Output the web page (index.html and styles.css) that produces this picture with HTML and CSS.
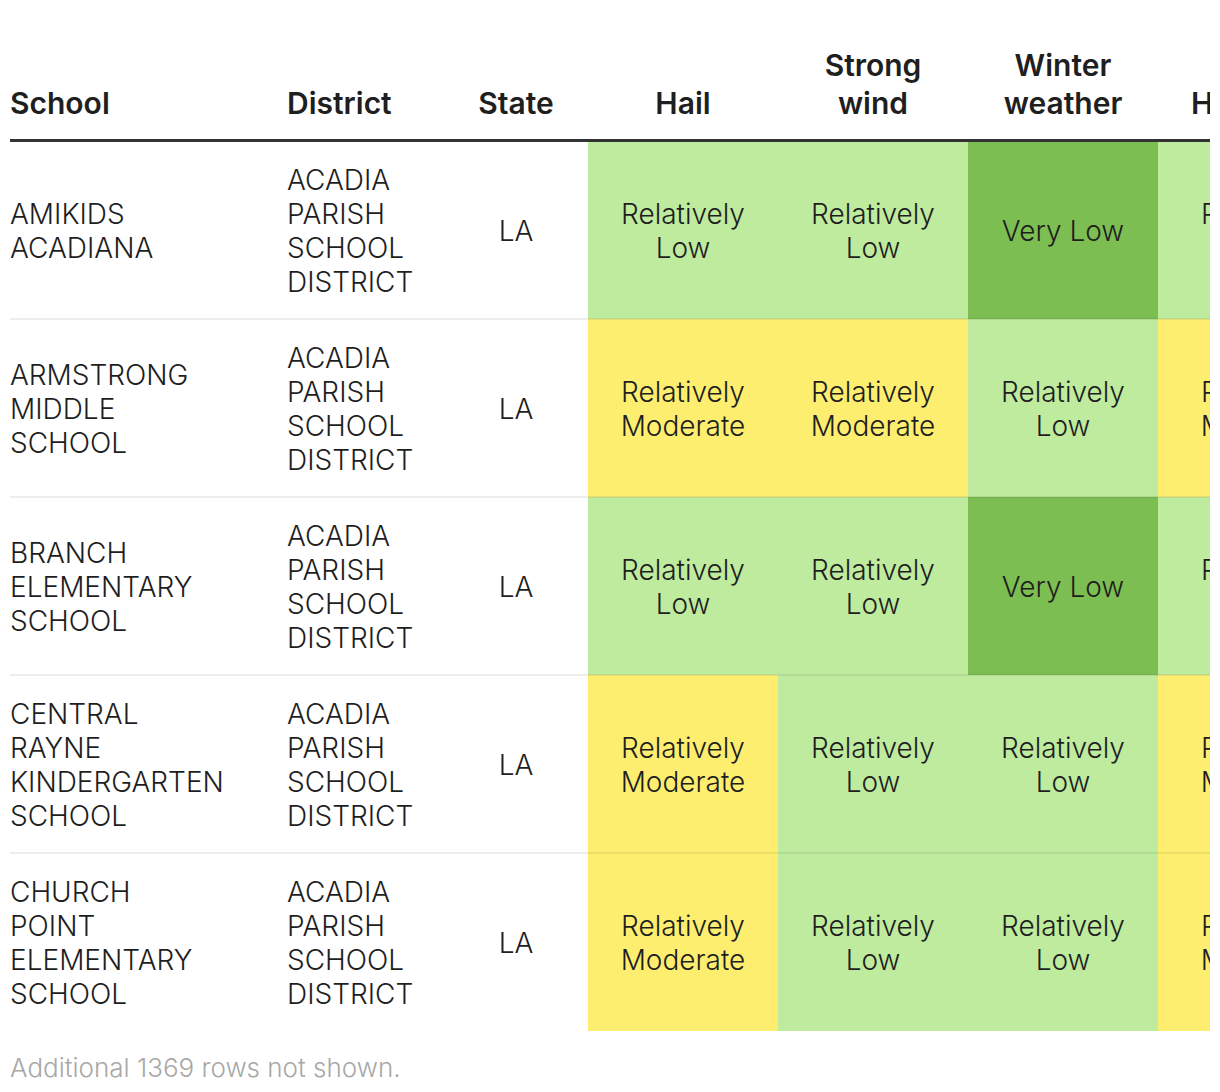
FILE: index.html
```html
<!DOCTYPE html>
<html lang="en">
<head>
<meta charset="utf-8">
<title>School hazard risk</title>
<link rel="stylesheet" href="styles.css">
</head>
<body>
<div class="wrap">
  <div class="scroller">
    <table class="risk">
      <colgroup>
        <col class="c-school"><col class="c-district"><col class="c-state">
        <col class="c-haz"><col class="c-haz"><col class="c-haz"><col class="c-haz4"><col class="c-haz">
      </colgroup>
      <thead>
        <tr>
          <th class="left">School</th>
          <th class="left">District</th>
          <th>State</th>
          <th>Hail</th>
          <th>Strong wind</th>
          <th>Winter weather</th>
          <th>Hurricane</th>
          <th>Heat wave</th>
        </tr>
      </thead>
      <tbody>
        <tr>
          <td class="school">AMIKIDS ACADIANA</td>
          <td class="district">ACADIA PARISH SCHOOL DISTRICT</td>
          <td class="state">LA</td>
          <td class="rl">Relatively Low</td>
          <td class="rl">Relatively Low</td>
          <td class="vl">Very Low</td>
          <td class="rl">Relatively Low</td>
          <td class="rm">Relatively Moderate</td>
        </tr>
        <tr>
          <td class="school">ARMSTRONG MIDDLE SCHOOL</td>
          <td class="district">ACADIA PARISH SCHOOL DISTRICT</td>
          <td class="state">LA</td>
          <td class="rm">Relatively Moderate</td>
          <td class="rm">Relatively Moderate</td>
          <td class="rl">Relatively Low</td>
          <td class="rm">Relatively Moderate</td>
          <td class="rm">Relatively Moderate</td>
        </tr>
        <tr>
          <td class="school">BRANCH ELEMENTARY SCHOOL</td>
          <td class="district">ACADIA PARISH SCHOOL DISTRICT</td>
          <td class="state">LA</td>
          <td class="rl">Relatively Low</td>
          <td class="rl">Relatively Low</td>
          <td class="vl">Very Low</td>
          <td class="rl">Relatively Low</td>
          <td class="rm">Relatively Moderate</td>
        </tr>
        <tr>
          <td class="school">CENTRAL RAYNE KINDERGARTEN SCHOOL</td>
          <td class="district">ACADIA PARISH SCHOOL DISTRICT</td>
          <td class="state">LA</td>
          <td class="rm">Relatively Moderate</td>
          <td class="rl">Relatively Low</td>
          <td class="rl">Relatively Low</td>
          <td class="rm">Relatively Moderate</td>
          <td class="rm">Relatively Moderate</td>
        </tr>
        <tr>
          <td class="school">CHURCH POINT ELEMENTARY SCHOOL</td>
          <td class="district">ACADIA PARISH SCHOOL DISTRICT</td>
          <td class="state">LA</td>
          <td class="rm">Relatively Moderate</td>
          <td class="rl">Relatively Low</td>
          <td class="rl">Relatively Low</td>
          <td class="rm">Relatively Moderate</td>
          <td class="rm">Relatively Moderate</td>
        </tr>
      </tbody>
    </table>
  </div>
  <p class="note">Additional 1369 rows not shown.</p>
</div>
</body>
</html>
```

FILE: styles.css
```css
html, body {
  margin: 0;
  padding: 0;
  background: #ffffff;
}

body {
  font-family: Inter, "Noto Sans", "Liberation Sans", sans-serif;
  color: #222222;
}

.wrap {
  padding: 0 10px;
}

.scroller {
  width: 1200px;
  overflow: hidden;
  padding-top: 46px;
}

.risk {
  border-collapse: collapse;
  table-layout: fixed;
  width: 1378px;
}

.c-school { width: 277px; }
.c-district { width: 157px; }
.c-state { width: 144px; }
.c-haz { width: 190px; }
.c-haz4 { width: 210px; }

.risk th {
  font-weight: 600;
  font-size: 30px;
  line-height: 38px;
  text-align: center;
  vertical-align: bottom;
  padding: 0 14px 17px;
  border-bottom: 3px solid #333333;
  color: #1f1f1f;
}

.risk th.left {
  text-align: left;
  padding-left: 0;
}

.risk td {
  font-weight: 300;
  font-size: 28px;
  line-height: 34px;
  text-align: center;
  vertical-align: middle;
  padding: 21px 12px 19px;
  border-bottom: 2px solid rgba(0, 0, 0, 0.07);
  color: #1e1e1e;
}

.risk tbody tr:last-child td {
  border-bottom: none;
  padding-bottom: 20px;
}

.risk td.school {
  text-align: left;
  padding-left: 0;
  padding-right: 77px;
}

.risk td.district {
  text-align: left;
  padding-left: 0;
  padding-right: 15px;
}

.rl { background: #bfeb9e; }
.vl { background: #7dbe52; }
.rm { background: #fdee70; }

.note {
  margin: 20px 0 0;
  font-weight: 300;
  font-size: 26px;
  line-height: 34px;
  color: #a8a8a8;
}
```
